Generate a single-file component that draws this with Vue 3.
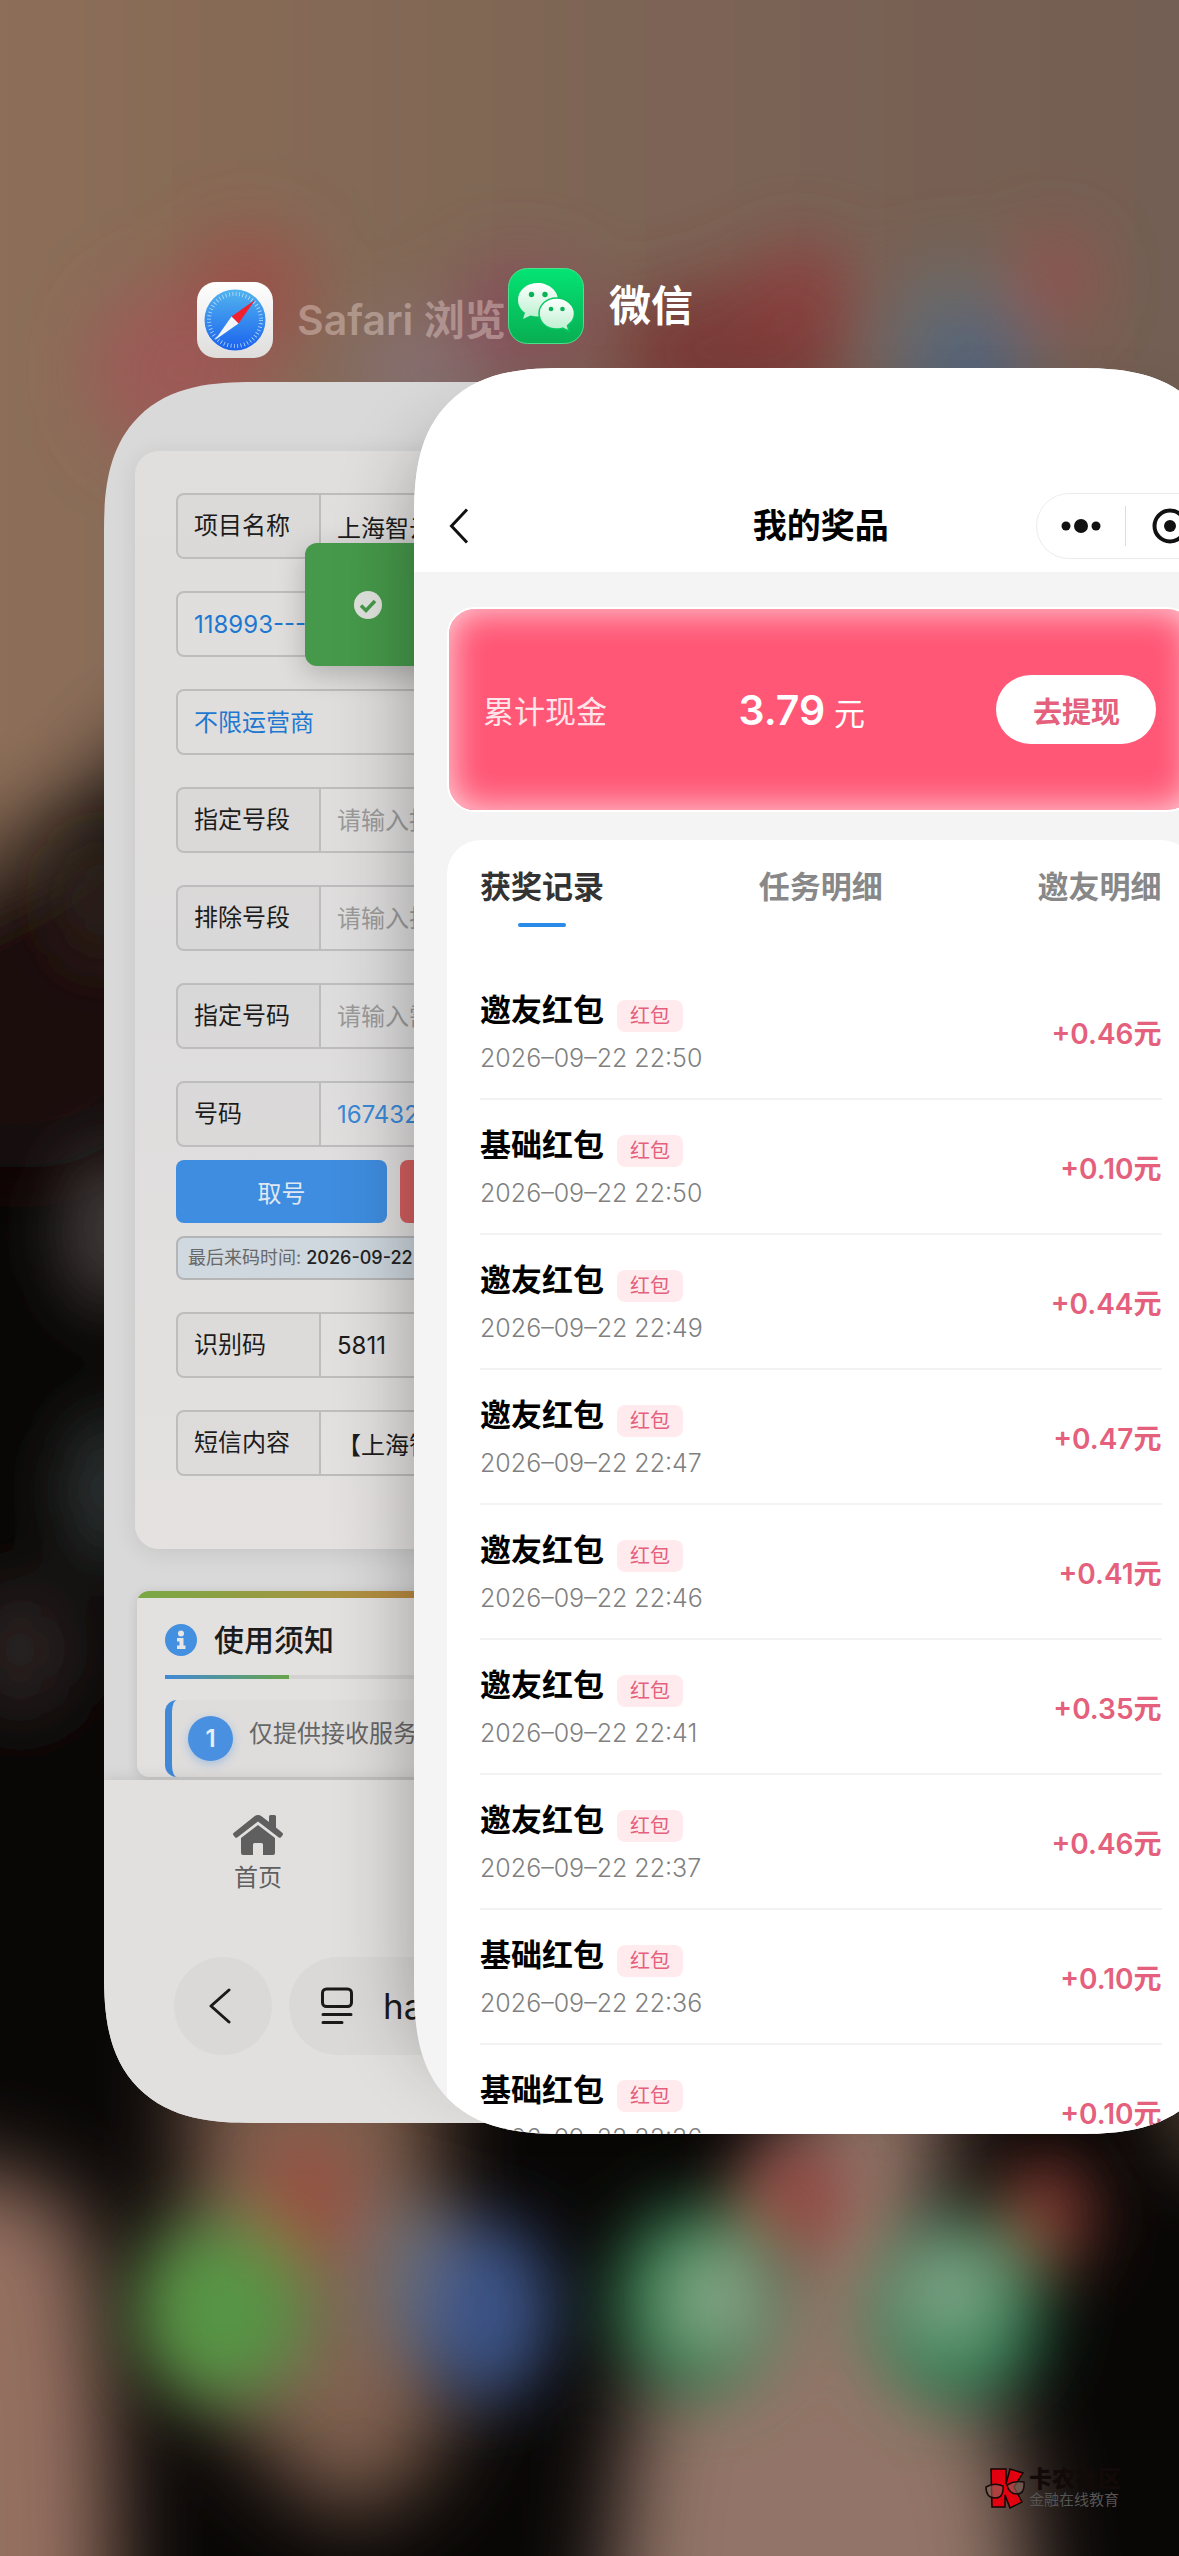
<template>
  <main class="switcher">
    <svg class="wallpaper" viewBox="0 0 1179 2556" preserveAspectRatio="none" aria-hidden="true">
      <defs>
        <linearGradient id="sky" x1="0" x2="1">
          <stop offset="0" stop-color="#92715a" />
          <stop offset="0.5" stop-color="#7d6554" />
          <stop offset="1" stop-color="#6f5b53" />
        </linearGradient>
        <filter id="soft" filterUnits="userSpaceOnUse" x="-300" y="-100" width="1800" height="2900">
          <feGaussianBlur stdDeviation="34" />
        </filter>
        <filter id="softer" filterUnits="userSpaceOnUse" x="-300" y="-300" width="1800" height="3200">
          <feGaussianBlur stdDeviation="44" />
        </filter>
      </defs>
      <rect width="1179" height="2556" fill="#090706" />
      <g filter="url(#softer)">
        <path d="M-200-200H1400V700H200L60 820-200 940Z" fill="url(#sky)" />
        <ellipse cx="20" cy="1020" rx="160" ry="150" fill="#1a100a" />
        <path d="M-200 2165Q60 2150 90 2240Q120 2400 110 2760H-200Z" fill="#946f60" />
        <path d="M190 2040H440Q420 2200 450 2330T350 2520Q250 2460 190 2360Z" fill="#80604f" />
        <path d="M830 2040H960Q910 2260 960 2370Q1040 2420 1030 2760H595Q620 2480 640 2380Q800 2300 760 2200Z" fill="#927467" />
        <path d="M1160 2050h200v100h-170z" fill="#7d6350" />
      </g>
      <g filter="url(#soft)">
        <ellipse v-for="(b, i) in blobs" :key="i" :cx="b[0]" :cy="b[1]" :rx="b[2]" :ry="b[3]" :fill="b[4]" />
      </g>
    </svg>

    <section class="app safari">
      <header class="app-head">
        <svg class="app-icon" viewBox="0 0 76 76" aria-hidden="true">
          <defs>
            <linearGradient id="sfBg" x2="0" y2="1"><stop stop-color="#fff" /><stop offset="1" stop-color="#dedddc" /></linearGradient>
            <linearGradient id="sfDial" x2="0" y2="1"><stop stop-color="#52b4ee" /><stop offset="1" stop-color="#1a62ee" /></linearGradient>
          </defs>
          <rect width="76" height="76" rx="19" fill="url(#sfBg)" />
          <circle cx="38" cy="38" r="30.500" fill="url(#sfDial)" />
          <circle cx="38" cy="38" r="26" fill="none" stroke="#b9dcfa" stroke-width="4" stroke-dasharray="0.800 2.603" />
          <path d="M58 18 34.500 34.500 41.500 41.500Z" fill="#f2202f" />
          <path d="M18 58 34.500 34.500 41.500 41.500Z" fill="#f3f5f8" />
        </svg>
        <span class="app-name faded">Safari 浏览</span>
      </header>

      <div class="window safari-window">
        <div class="safari-page">
          <form class="panel" @submit.prevent>
            <template v-for="field in fields" :key="field.id">
              <div class="field">
                <select v-if="field.select" :id="field.id" :aria-label="field.value">
                  <option>{{ field.value }}</option>
                </select>
                <template v-else>
                  <label :for="field.id">{{ field.label }}</label>
                  <input :id="field.id" v-model="field.value" :class="{ blue: field.blue }" :placeholder="field.placeholder" />
                </template>
              </div>
              <template v-if="field.id === 'number'">
                <div class="actions">
                  <button type="button" class="take">取号</button>
                  <button type="button" class="release" aria-label="release"></button>
                </div>
                <p class="last-time">最后来码时间: <b>2026-09-22</b></p>
              </template>
            </template>
          </form>

          <section class="notice">
            <h2>
              <svg width="32" height="32" viewBox="0 0 32 32" aria-hidden="true">
                <circle cx="16" cy="16" r="16" fill="#438fe0" />
                <circle cx="16" cy="9.500" r="3" fill="#e8e6e5" />
                <path d="M12 14h6.500v7.500H20.500V25H12v-3.500h2.500v-4H12Z" fill="#e8e6e5" />
              </svg>
              使用须知
            </h2>
            <div class="rule"></div>
            <div class="notice-item">
              <span class="num">1</span>
              <span>仅提供接收服务</span>
            </div>
          </section>
        </div>

        <div class="toast">
          <svg width="28" height="28" viewBox="0 0 28 28" aria-hidden="true">
            <circle cx="14" cy="14" r="14" fill="#dfe2dd" />
            <path d="M7 14.500 12 19.500 21 10" fill="none" stroke="#46994a" stroke-width="3.500" />
          </svg>
        </div>

        <footer class="safari-foot">
          <a class="home" href="#">
            <svg width="50" height="40" viewBox="0 0 50 40" aria-hidden="true">
              <path d="M25 0q2 0 3.500 1.200L36 7V1.500Q36 0 37.500 0h4Q43 0 43 1.500V12.500l6.500 5.500q1 1 .2 2l-1.700 2.300q-1 1-2.200.2L25 6.500 4.200 22.500q-1.200.8-2.200-.2L.3 20q-.8-1 .2-2L21.500 1.200Q23 0 25 0Z" fill="#5f5f5f" />
              <path d="M25 10 42 23V38q0 2-2 2H30V29.500q0-1.500-1.500-1.500h-7q-1.500 0-1.500 1.500V40H10q-2 0-2-2V23Z" fill="#5f5f5f" />
            </svg>
            <span>首页</span>
          </a>
          <div class="address">
            <button type="button" class="back" aria-label="back">
              <svg width="24" height="36" viewBox="0 0 24 36" aria-hidden="true">
                <path d="M21 2 3 18 21 34" fill="none" stroke="#1a1a1a" stroke-width="3" stroke-linecap="round" stroke-linejoin="round" />
              </svg>
            </button>
            <button type="button" class="url">
              <svg width="32" height="38" viewBox="0 0 32 38" aria-hidden="true" fill="none" stroke="#1a1a1a" stroke-width="3" stroke-linecap="round">
                <rect x="1.500" y="2" width="29" height="17.500" rx="4" />
                <path d="M2 27.500H30M2 35.500H21" />
              </svg>
              <span>ha</span>
            </button>
          </div>
        </footer>
      </div>
    </section>

    <section class="app wechat">
      <header class="app-head">
        <svg class="app-icon" viewBox="0 0 76 76" aria-hidden="true">
          <defs>
            <linearGradient id="wxBg" x2="0" y2="1"><stop stop-color="#04e474" /><stop offset="1" stop-color="#08ae52" /></linearGradient>
            <linearGradient id="wxA" x2="0" y2="1"><stop stop-color="#fff" /><stop offset="1" stop-color="#b9f0cd" /></linearGradient>
          </defs>
          <rect x="0.500" y="0.500" width="75" height="75" rx="19" fill="url(#wxBg)" stroke="#4be08c" />
          <path d="M30 15C18.500 15 10 22.500 10 32c0 5 2.600 9.700 7 12.800L15 51l7.500-3.600c2.400.7 4.900 1 7.500 1C41 48.400 50 41 50 32S41 15 30 15Z" fill="url(#wxA)" />
          <path d="M48.500 30C38.500 30 31 37 31 45.500S38.500 61 48.500 61c2.100 0 4.100-.3 6-.9l6.500 3-1.500-5.600C63.800 54.500 66.500 50.300 66.500 45.500 66.500 37 58.500 30 48.500 30Z" fill="url(#wxA)" stroke="#06c863" stroke-width="1.500" />
          <g fill="#08b356">
            <circle cx="23.500" cy="26.500" r="2.700" /><circle cx="37" cy="26.500" r="2.700" />
            <circle cx="43" cy="41" r="2.300" /><circle cx="54.500" cy="41" r="2.300" />
          </g>
        </svg>
        <span class="app-name">微信</span>
      </header>

      <div class="window wechat-window">
        <nav class="wx-nav">
          <button type="button" class="wx-back" aria-label="back">
            <svg width="20" height="36" viewBox="0 0 20 36" aria-hidden="true">
              <path d="M18 1.500 2.500 18 18 34.500" fill="none" stroke="#111" stroke-width="3" />
            </svg>
          </button>
          <h1>我的奖品</h1>
          <div class="capsule">
            <button type="button" aria-label="more">
              <svg width="40" height="16" viewBox="0 0 40 16" fill="#111" aria-hidden="true">
                <circle cx="5" cy="8" r="4.500" /><circle cx="20" cy="8" r="7" /><circle cx="35" cy="8" r="4.500" />
              </svg>
            </button>
            <button type="button" aria-label="close">
              <svg width="36" height="36" viewBox="0 0 36 36" aria-hidden="true">
                <circle cx="18" cy="18" r="15.500" fill="none" stroke="#111" stroke-width="4" />
                <circle cx="18" cy="18" r="6" fill="#111" />
              </svg>
            </button>
          </div>
        </nav>

        <div class="cash">
          <span class="cash-label">累计现金</span>
          <span class="cash-sum"><b>3.79</b> 元</span>
          <button type="button">去提现</button>
        </div>

        <section class="records">
          <div class="tabs">
            <button v-for="tab in tabs" :key="tab" type="button" :class="{ active: tab === activeTab }" @click="activeTab = tab">
              {{ tab }}
            </button>
          </div>
          <ul>
            <li v-for="(item, i) in records" :key="i">
              <div>
                <div class="title">{{ item.title }}<span class="tag">红包</span></div>
                <time>{{ item.time }}</time>
              </div>
              <span class="amount">{{ item.amount }}</span>
            </li>
          </ul>
        </section>
      </div>
    </section>

    <div class="watermark">
      <svg width="42" height="42" viewBox="0 0 42 42" aria-hidden="true">
        <path d="M7 2H22V17L26 2 39 6 30 20 38 35 26 41 21 28V40H8Z" fill="#e3000f" stroke="#140404" stroke-width="1.500" />
        <path d="M2 20Q10 15 19 19Q20 31 11 31T2 20ZM23 18Q31 13 40 15Q41 27 33 27T23 18Z" fill="#8a6a60" fill-opacity="0.600" stroke="#150c0a" stroke-width="1.500" />
      </svg>
      <div>
        <strong>卡农社区</strong>
        <small>金融在线教育</small>
      </div>
    </div>
  </main>
</template>

<script setup>
import { ref } from 'vue';

// cx, cy, rx, ry, colour
const blobs = [
  [180, 370, 90, 90, '#9c5a57'],
  [250, 290, 60, 60, '#9a5149'],
  [430, 370, 80, 60, '#85706f'],
  [520, 320, 70, 60, '#85505a'],
  [730, 350, 120, 70, '#7a3b39'],
  [800, 290, 56, 46, '#8a403e'],
  [955, 350, 80, 90, '#6b6a69'],
  [970, 370, 54, 50, '#50627c'],
  [1055, 280, 36, 48, '#94514e'],
  [100, 900, 30, 60, '#382c22'],
  [110, 1230, 46, 80, '#46403f'],
  [110, 1490, 46, 80, '#2e3434'],
  [20, 1650, 60, 70, '#2a2022'],
  [305, 2200, 48, 60, '#9a4f40'],
  [222, 2310, 86, 92, '#569545'],
  [412, 2280, 40, 84, '#747779'],
  [485, 2310, 68, 92, '#3a5286'],
  [795, 2200, 52, 54, '#9a4a44'],
  [700, 2300, 84, 94, '#3a8c5a'],
  [725, 2300, 50, 50, '#88a688'],
  [1045, 2215, 46, 56, '#8a3c36'],
  [955, 2310, 88, 94, '#36885a'],
  [945, 2290, 48, 48, '#80a488'],
];

const fields = ref([
  { id: 'project', label: '项目名称', value: '上海智云' },
  { id: 'channel', value: '118993----', select: true },
  { id: 'carrier', value: '不限运营商', select: true },
  { id: 'segment', label: '指定号段', value: '', placeholder: '请输入指' },
  { id: 'exclude', label: '排除号段', value: '', placeholder: '请输入排' },
  { id: 'assign', label: '指定号码', value: '', placeholder: '请输入需' },
  { id: 'number', label: '号码', value: '1674321', blue: true },
  { id: 'code', label: '识别码', value: '5811' },
  { id: 'sms', label: '短信内容', value: '【上海智' },
]);

const tabs = ['获奖记录', '任务明细', '邀友明细'];
const activeTab = ref('获奖记录');

const records = [
  { title: '邀友红包', time: '2026–09–22 22:50', amount: '+0.46元' },
  { title: '基础红包', time: '2026–09–22 22:50', amount: '+0.10元' },
  { title: '邀友红包', time: '2026–09–22 22:49', amount: '+0.44元' },
  { title: '邀友红包', time: '2026–09–22 22:47', amount: '+0.47元' },
  { title: '邀友红包', time: '2026–09–22 22:46', amount: '+0.41元' },
  { title: '邀友红包', time: '2026–09–22 22:41', amount: '+0.35元' },
  { title: '邀友红包', time: '2026–09–22 22:37', amount: '+0.46元' },
  { title: '基础红包', time: '2026–09–22 22:36', amount: '+0.10元' },
  { title: '基础红包', time: '2026–09–22 22:36', amount: '+0.10元' },
];
</script>

<style>
body {
  background: #0b0908;
}
</style>

<style scoped>
.switcher {
  position: relative;
  min-height: 100vh;
  overflow: hidden;
  font-family: Inter, "Noto Sans CJK SC", sans-serif;
  color: #1c1c1c;
}

.switcher * {
  box-sizing: border-box;
}

button,
input,
select {
  margin: 0;
  padding: 0;
  border: 0;
  background: none;
  font: inherit;
  color: inherit;
  border-radius: 0;
}

h1,
h2,
p,
ul {
  margin: 0;
  padding: 0;
}

.wallpaper {
  position: absolute;
  inset: 0;
  width: 100%;
  height: 100%;
}

/* app cards */
.app {
  position: absolute;
}

.safari {
  top: 282px;
  left: 104px;
  width: 68%;
}

.wechat {
  top: 268px;
  left: 414px;
  width: 69%;
}

.app-head {
  display: flex;
  align-items: center;
  gap: 25px;
  padding: 0 94px 24px;
}

.app-icon {
  width: 76px;
  height: 76px;
}

.app-name {
  font-size: 42px;
  line-height: 76px;
  font-weight: 600;
  color: #fff;
  white-space: nowrap;
}

.safari .app-head {
  gap: 24px;
  padding-left: 93px;
}

.faded {
  font-size: 41px;
  color: rgba(255, 235, 230, 0.35);
}

.window {
  display: flex;
  flex-direction: column;
  position: relative;
  aspect-ratio: 1179 / 2560;
  border-radius: 118px;
  overflow: hidden;
}

@supports (corner-shape: superellipse(1.4)) {
  .window,
  .wechat::before {
    border-radius: 150px;
    corner-shape: superellipse(1.4);
  }
}

/* safari card */
.safari-window {
  background: #dad9da;
}

.safari-page {
  flex: 1;
  min-height: 0;
  overflow: hidden;
  padding: 69px 31px 0;
}

.panel {
  padding: 42px 41px 73px;
  border-radius: 24px;
  background: linear-gradient(#e1dfdd, #dedddd 50%, #e4e1e0);
  box-shadow: 0 4px 24px rgba(0, 0, 0, 0.09);
}

.field {
  display: flex;
  height: 66px;
  margin-bottom: 32px;
  border: 2px solid #bebdbd;
  border-radius: 8px;
  font-size: 24px;
  overflow: hidden;
}

.field:last-child {
  margin-bottom: 0;
}

.field label {
  flex: none;
  width: 143px;
  padding-left: 16px;
  line-height: 62px;
  border-right: 2px solid #bebdbd;
  background: rgba(0, 0, 0, 0.02);
}

.field input {
  flex: 1;
  min-width: 0;
  padding-left: 16px;
}

.field input::placeholder {
  color: #9b9a9a;
  opacity: 1;
}

.field select {
  flex: 1;
  appearance: none;
  padding-left: 16px;
  color: #1e78d0;
}

.field .blue {
  color: #3a89d8;
}

.field:has(.blue) {
  margin-bottom: 13px;
}

.actions {
  display: flex;
  gap: 13px;
  margin-bottom: 13px;
}

.actions button {
  height: 63px;
  border-radius: 8px;
  font-size: 24px;
  color: #dfe8f2;
}

.take {
  width: 211px;
  background: #3f8de0;
}

.release {
  flex: 1;
  background: #d45f5f;
}

.last-time {
  height: 44px;
  margin-bottom: 32px;
  padding-left: 10px;
  border: 2px solid #b3b5b7;
  border-radius: 8px;
  background: linear-gradient(90deg, #d0d8e0, #c8d2d8);
  font-size: 18px;
  line-height: 40px;
  color: #686868;
}

.last-time b {
  font-weight: 500;
  color: #222;
}

.notice {
  position: relative;
  margin: 42px 2px 0;
  padding: 0 28px;
  border-radius: 12px;
  background: #e3e1df;
  box-shadow: 0 2px 12px rgba(0, 0, 0, 0.12);
  overflow: hidden;
}

.notice::before {
  content: "";
  display: block;
  height: 7px;
  margin: 0 -28px;
  background: linear-gradient(90deg, #79a845, #c0893f 40%, #c0603f);
}

.notice h2 {
  display: flex;
  align-items: center;
  gap: 17px;
  padding: 20px 0 13px;
  font-size: 30px;
  line-height: 44px;
  font-weight: 500;
}

.rule {
  height: 4px;
  background: linear-gradient(90deg, #4189d8, #67a548) 0 0 / 124px 4px no-repeat #d3d2d0;
}

.notice-item {
  display: flex;
  align-items: flex-start;
  gap: 16px;
  height: 77px;
  margin-top: 21px;
  padding: 16px 0 0 16px;
  border-left: 7px solid #4189d8;
  border-radius: 12px;
  background: #dfdddc;
  font-size: 24px;
  line-height: 36px;
  color: #666;
}

.num {
  width: 45px;
  height: 45px;
  border-radius: 50%;
  background: #4990e0;
  box-shadow: 0 3px 10px rgba(73, 144, 224, 0.4);
  font-weight: 600;
  line-height: 45px;
  text-align: center;
  color: #e8eef5;
}

.toast {
  position: absolute;
  top: 161px;
  left: 201px;
  display: flex;
  align-items: center;
  width: 400px;
  height: 123px;
  padding-left: 49px;
  border-radius: 12px;
  background: #46994a;
  box-shadow: 0 8px 28px rgba(0, 0, 0, 0.22);
}

.safari-foot {
  position: relative;
  padding: 35px 70px 68px 0;
  background: #e1e0df;
  box-shadow: 0 -2px 14px rgba(0, 0, 0, 0.1);
}

.home {
  display: flex;
  flex-direction: column;
  align-items: center;
  gap: 8px;
  width: 308px;
  font-size: 24px;
  line-height: 30px;
  color: #5f5f5f;
  text-decoration: none;
}

.address {
  display: flex;
  gap: 17px;
  margin-top: 64px;
  padding-left: 70px;
}

.address button {
  display: flex;
  align-items: center;
  height: 98px;
  border-radius: 49px;
  background: #dad9d8;
}

.back {
  flex: none;
  justify-content: center;
  width: 98px;
  padding-right: 6px;
}

.url {
  flex: 1;
  gap: 30px;
  padding-left: 32px;
  font-size: 35px;
  color: #1a1a1a;
}

/* wechat card */
.wechat::before {
  content: "";
  position: absolute;
  inset: 160px 0 60px;
  border-radius: 118px;
  box-shadow: 0 0 80px rgba(0, 0, 0, 0.32);
}

.wechat-window {
  background: #f4f4f4;
}

.wx-nav {
  display: grid;
  grid-template-columns: 1fr auto 1fr;
  align-items: center;
  padding: 125px 13px 13px;
  background: #fff;
}

.wx-nav h1 {
  font-size: 34px;
  line-height: 50px;
  font-weight: 600;
  color: #000;
}

.wx-back {
  justify-self: start;
  height: 36px;
  margin-left: 22px;
}

.wx-back svg {
  display: block;
}

.capsule {
  justify-self: end;
  display: flex;
  width: 179px;
  height: 66px;
  border: 1px solid #ececec;
  border-radius: 33px;
}

.capsule button {
  flex: 1;
  display: flex;
  align-items: center;
  justify-content: center;
  margin: 12px 0;
}

.capsule button + button {
  border-left: 1px solid #ddd;
}

.cash {
  display: flex;
  align-items: center;
  justify-content: space-between;
  flex: none;
  height: 205px;
  margin: 35px 33px 28px;
  padding: 0 36px 0 34px;
  border: 2px solid #fff;
  border-radius: 28px;
  background: #ff5775;
  box-shadow: inset 0 0 36px rgba(255, 255, 255, 0.8);
  font-size: 31px;
  color: #fff;
}

.cash-label {
  color: #ffe4ea;
}

.cash b {
  font-size: 41px;
  font-weight: 600;
}

.cash button {
  width: 160px;
  height: 69px;
  border-radius: 35px;
  background: #fff;
  font-size: 29px;
  font-weight: 600;
  color: #e4607c;
}

.records {
  flex: none;
  margin: 0 33px;
  padding: 26px 33px 0;
  border-radius: 34px 34px 0 0;
  background: #fff;
}

.tabs {
  display: flex;
  justify-content: space-between;
  margin-bottom: 38px;
}

.tabs button {
  font-size: 31px;
  line-height: 42px;
  font-weight: 600;
  color: #888;
}

.tabs button::after {
  content: "";
  display: block;
  width: 48px;
  height: 4px;
  margin: 15px auto 0;
  border-radius: 2px;
}

.tabs .active {
  color: #333;
}

.tabs .active::after {
  background: #2a8ae8;
}

.records ul {
  list-style: none;
}

.records li {
  display: flex;
  align-items: center;
  justify-content: space-between;
  height: 135px;
  border-bottom: 2px solid #f3f3f4;
}

.title {
  display: flex;
  align-items: center;
  gap: 13px;
  font-size: 31px;
  line-height: 44px;
  font-weight: 700;
  color: #000;
}

.tag {
  align-self: flex-end;
  padding: 0 13px;
  border-radius: 8px;
  background: #ffebee;
  font-size: 20px;
  line-height: 32px;
  font-weight: 400;
  color: #e4607c;
}

time {
  display: block;
  margin-top: 8px;
  font-size: 25px;
  line-height: 36px;
  font-weight: 300;
  color: #808080;
}

.amount {
  font-size: 28px;
  font-weight: 600;
  color: #e4607c;
}

.watermark {
  position: absolute;
  right: 58px;
  bottom: 47px;
  display: flex;
  align-items: center;
  gap: 3px;
}

.watermark div {
  display: flex;
  flex-direction: column;
}

.watermark strong {
  font-size: 23px;
  line-height: 24px;
  font-weight: 900;
  color: #120a08;
}

.watermark small {
  font-size: 15px;
  line-height: 18px;
  color: #565453;
}
</style>
